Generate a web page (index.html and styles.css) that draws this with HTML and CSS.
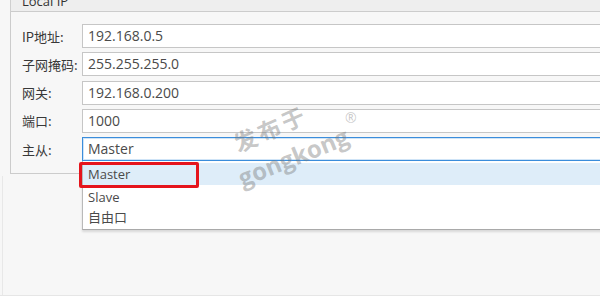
FILE: index.html
```html
<!DOCTYPE html>
<html>
<head>
<meta charset="utf-8">
<link rel="stylesheet" href="styles.css">
</head>
<body>
<div class="window">
  <div class="groupbox">
    <div class="group-header"><span class="group-title">Local IP</span></div>
    <div class="group-body">
      <div class="row"><span class="label">IP地址:</span><div class="field">192.168.0.5</div></div>
      <div class="row"><span class="label">子网掩码:</span><div class="field">255.255.255.0</div></div>
      <div class="row"><span class="label">网关:</span><div class="field">192.168.0.200</div></div>
      <div class="row"><span class="label">端口:</span><div class="field">1000</div></div>
      <div class="row"><span class="label">主从:</span><div class="field combo">Master</div></div>
    </div>
  </div>
  <div class="dropdown">
    <div class="item selected">Master</div>
    <div class="item">Slave</div>
    <div class="item">自由口</div>
  </div>
  <div class="highlight-box"></div>
  <div class="watermark">
    <span class="wm-cn">发布于</span>
    <span class="wm-en">gongkong</span>
    <span class="wm-r">®</span>
  </div>
</div>
</body>
</html>
```
FILE: styles.css
```css
html, body {
  margin: 0;
  padding: 0;
}
body {
  width: 600px;
  height: 296px;
  overflow: hidden;
  background: #f7f7f7;
  font-family: "Open Sans", "Noto Sans CJK SC", sans-serif;
}
.window {
  position: relative;
  width: 600px;
  height: 296px;
  overflow: hidden;
  box-sizing: border-box;
  border-bottom: 1px solid #e6e6e6;
}
.window::before {
  content: "";
  position: absolute;
  left: 2px;
  top: 176px;
  bottom: 0;
  border-left: 1px solid #e8e8e8;
}
.groupbox {
  margin-left: 10px;
  width: 700px;
}
.group-header {
  height: 11px;
  background: #eeeeee;
  border-left: 1px solid #cfcfcf;
  border-bottom: 1px solid #cccccc;
  overflow: hidden;
}
.group-title {
  display: block;
  margin: -6px 0 0 11px;
  font-family: "Open Sans", sans-serif;
  font-size: 13px;
  line-height: 15px;
  color: #333;
}
.group-body {
  height: 162px;
  box-sizing: border-box;
  border-left: 1px solid #cccccc;
  border-bottom: 1px solid #cccccc;
  padding: 12px 0 0 11px;
  display: flex;
  flex-direction: column;
  gap: 4.25px;
}
.row {
  display: flex;
  align-items: center;
  height: 24px;
}
.label {
  width: 60px;
  flex: none;
  font-family: "Noto Sans CJK SC", sans-serif;
  font-size: 13px;
  color: #383838;
  white-space: nowrap;
}
.field {
  flex: 1;
  height: 24px;
  box-sizing: border-box;
  border: 1px solid #c6c6c6;
  background: #fff;
  padding-left: 5px;
  font-size: 14px;
  line-height: 21px;
  color: #4a4a4a;
  font-family: "Open Sans", "Noto Sans CJK SC", sans-serif;
}
.combo {
  border: 1px solid #3b8ddb;
  box-shadow: inset 0 0 0 1px #cfe4f7;
}
.dropdown {
  position: absolute;
  left: 82px;
  top: 161px;
  width: 530px;
  height: 69px;
  box-sizing: border-box;
  background: #fff;
  border-left: 1px solid #b9b9b9;
  border-bottom: 1px solid #a9a9a9;
  box-shadow: 0 2px 2px rgba(0, 0, 0, 0.12);
  padding-top: 2px;
  font-size: 13px;
  color: #4a4a4a;
}
.item {
  height: 20px;
  line-height: 20px;
  padding-left: 5px;
  font-family: "Open Sans", "Noto Sans CJK SC", sans-serif;
}
.item.selected {
  height: 22px;
  line-height: 22px;
  background: #deedf9;
  margin-bottom: 2px;
}
.highlight-box {
  position: absolute;
  left: 79px;
  top: 162px;
  width: 120px;
  height: 26px;
  box-sizing: border-box;
  border: 3px solid #e5141c;
  border-radius: 2px;
}
.watermark {
  position: absolute;
  left: 222px;
  top: 100px;
  width: 140px;
  height: 90px;
  color: rgba(120, 120, 120, 0.42);
  pointer-events: none;
}
.wm-cn {
  position: absolute;
  left: 9px;
  top: 11px;
  font-family: "Noto Sans CJK SC", sans-serif;
  font-size: 23px;
  line-height: 34px;
  font-weight: 700;
  transform: rotate(-24deg);
  letter-spacing: 3px;
}
.wm-en {
  position: absolute;
  left: 13px;
  top: 41px;
  font-family: "Open Sans", sans-serif;
  font-size: 24px;
  line-height: 32px;
  font-weight: 700;
  transform: rotate(-22deg);
}
.wm-r {
  position: absolute;
  left: 123px;
  top: 8px;
  font-family: "Open Sans", sans-serif;
  font-size: 14px;
  color: rgba(120, 120, 120, 0.4);
}
```
